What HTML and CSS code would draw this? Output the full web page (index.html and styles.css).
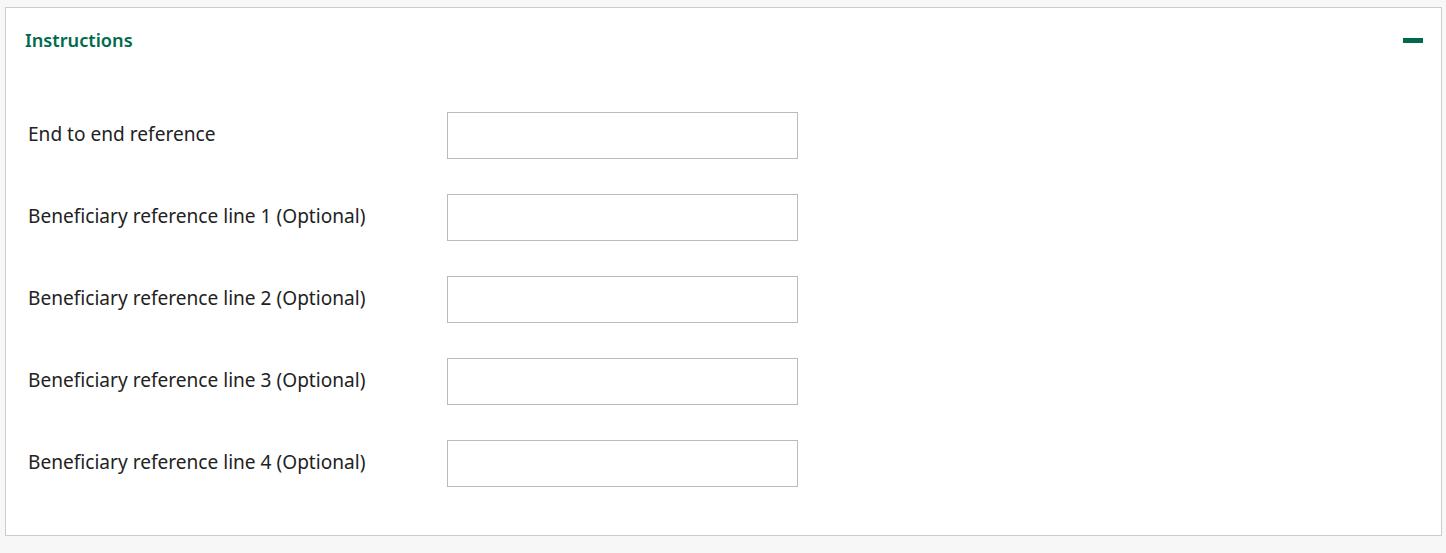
FILE: index.html
```html
<!DOCTYPE html>
<html>
<head>
<meta charset="utf-8">
<link rel="stylesheet" href="styles.css">
</head>
<body>
<section class="panel">
  <header class="panel-header">
    <h2 class="panel-title">Instructions</h2>
    <button class="collapse-btn" aria-label="Collapse"><span class="minus"></span></button>
  </header>
  <div class="panel-body">
    <div class="field-row">
      <label class="field-label" for="f1">End to end reference</label>
      <input class="field-input" id="f1" type="text">
    </div>
    <div class="field-row">
      <label class="field-label" for="f2">Beneficiary reference line 1 (Optional)</label>
      <input class="field-input" id="f2" type="text">
    </div>
    <div class="field-row">
      <label class="field-label" for="f3">Beneficiary reference line 2 (Optional)</label>
      <input class="field-input" id="f3" type="text">
    </div>
    <div class="field-row">
      <label class="field-label" for="f4">Beneficiary reference line 3 (Optional)</label>
      <input class="field-input" id="f4" type="text">
    </div>
    <div class="field-row">
      <label class="field-label" for="f5">Beneficiary reference line 4 (Optional)</label>
      <input class="field-input" id="f5" type="text">
    </div>
  </div>
</section>
</body>
</html>
```

FILE: styles.css
```css
html, body {
  margin: 0;
  padding: 0;
  background: #f7f7f7;
}
body {
  padding: 7px 4px 0 5px;
  font-family: "Noto Sans", "Open Sans", sans-serif;
  color: #333333;
}
.panel {
  background: #ffffff;
  border: 1px solid #cccccc;
  height: 529px;
  box-sizing: border-box;
}
.panel-header {
  display: flex;
  align-items: center;
  justify-content: space-between;
  height: 64px;
  padding: 0 18px 0 19px;
}
.panel-title {
  margin: 0;
  font-size: 18.2px;
  font-weight: 600;
  color: #006a4d;
  line-height: 1;
}
.collapse-btn {
  border: 0;
  background: none;
  padding: 0;
  width: 20px;
  height: 20px;
  display: flex;
  align-items: center;
  cursor: pointer;
}
.minus {
  display: block;
  width: 20px;
  height: 5px;
  background: #006a4d;
}
.panel-body {
  padding: 40px 0 0 22px;
  display: flex;
  flex-direction: column;
  gap: 35px;
}
.field-row {
  display: flex;
  align-items: center;
}
.field-label {
  width: 419px;
  font-size: 19.1px;
  font-weight: 400;
  color: #222222;
  line-height: 1;
  padding-bottom: 1px;
}
.field-input {
  width: 351px;
  height: 47px;
  box-sizing: border-box;
  border: 1px solid #bbbbbb;
  margin: 0;
  padding: 0 10px;
  font-size: 18px;
  font-family: inherit;
}
```
